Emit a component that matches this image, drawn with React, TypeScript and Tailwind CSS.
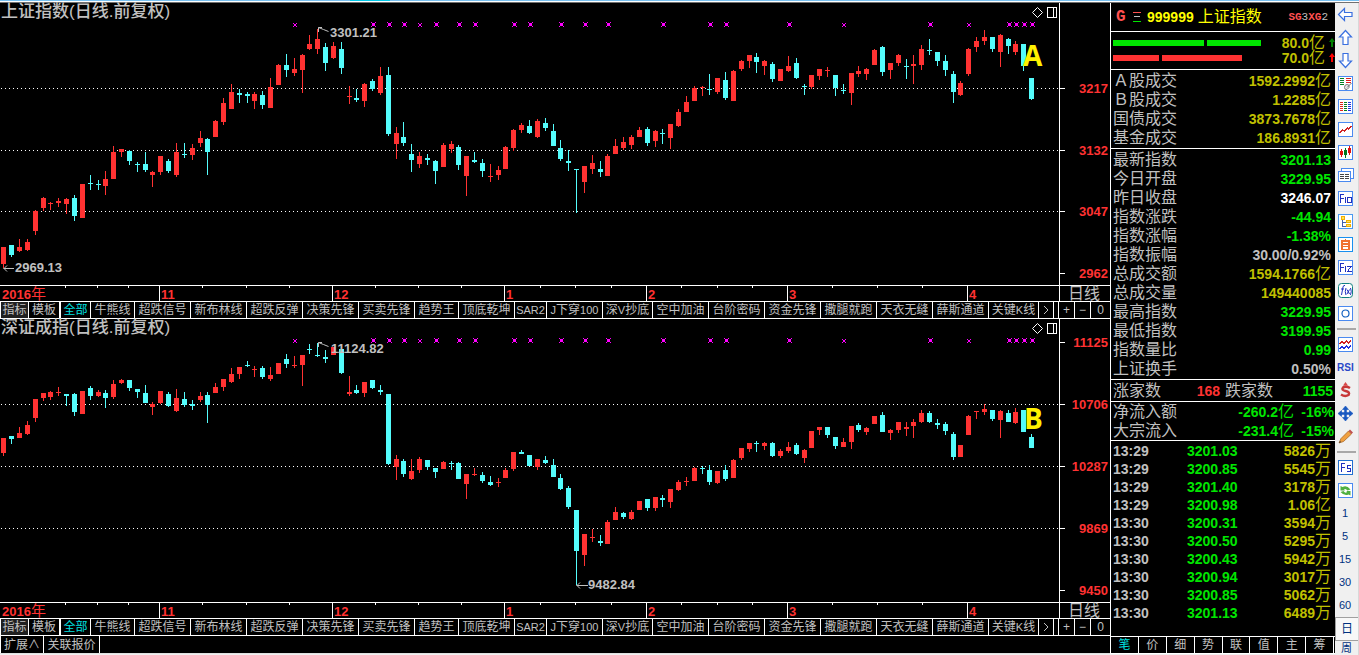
import type { ReactNode } from 'react';

// x, high, body top, body bottom, low, rising
type Candle = [number, number, number, number, number, 0 | 1];

const SHANGHAI: Candle[] = [
  [3, 247, 247, 264, 268, 1], [11, 245, 245, 255, 257, 0], [19, 239, 247, 251, 252, 1], [27, 239, 242, 250, 251, 1],
  [35, 210, 211, 231, 235, 1], [43, 197, 198, 208, 211, 1], [50, 202, 203, 204, 210, 1], [58, 198, 201, 203, 207, 1],
  [66, 198, 199, 204, 214, 1], [74, 195, 198, 216, 221, 0], [82, 184, 184, 218, 218, 1], [90, 175, 183, 184, 190, 0],
  [98, 180, 184, 185, 190, 0], [105, 171, 179, 186, 195, 1], [113, 146, 152, 179, 179, 1], [121, 149, 149, 152, 157, 1],
  [129, 150, 151, 161, 165, 0], [137, 162, 164, 165, 172, 0], [145, 152, 164, 170, 172, 0], [152, 171, 172, 175, 187, 1],
  [160, 156, 156, 172, 175, 1], [168, 159, 161, 171, 173, 0], [176, 143, 152, 175, 177, 1], [184, 143, 154, 155, 158, 0],
  [192, 144, 148, 155, 160, 1], [200, 131, 138, 143, 147, 1], [207, 138, 139, 152, 175, 0], [215, 120, 121, 137, 137, 1],
  [223, 98, 103, 122, 125, 1], [231, 84, 92, 109, 109, 1], [239, 89, 93, 95, 103, 0], [247, 92, 94, 96, 103, 0],
  [254, 92, 94, 101, 109, 1], [262, 91, 95, 105, 109, 0], [270, 78, 87, 108, 108, 1], [278, 64, 65, 85, 85, 1],
  [286, 54, 65, 70, 77, 0], [294, 58, 69, 73, 76, 1], [302, 54, 55, 70, 93, 1], [309, 35, 44, 49, 50, 1],
  [317, 29, 39, 49, 54, 1], [325, 43, 47, 63, 71, 0], [333, 42, 46, 58, 59, 1], [341, 42, 49, 68, 74, 0],
  [349, 86, 96, 97, 104, 1], [356, 89, 98, 100, 102, 0], [364, 83, 84, 101, 107, 1], [372, 79, 81, 89, 91, 0],
  [380, 67, 76, 93, 95, 1], [388, 67, 75, 134, 136, 0], [396, 127, 133, 144, 159, 1], [403, 122, 137, 143, 146, 0],
  [411, 144, 154, 160, 172, 0], [419, 152, 156, 164, 168, 1], [427, 154, 158, 160, 165, 0], [435, 160, 161, 171, 184, 0],
  [443, 143, 145, 167, 167, 1], [451, 141, 144, 149, 153, 1], [458, 145, 147, 165, 170, 0], [466, 156, 156, 176, 196, 1],
  [474, 152, 160, 162, 163, 0], [482, 159, 163, 171, 177, 0], [490, 164, 176, 177, 182, 1], [498, 166, 170, 175, 180, 1],
  [505, 146, 147, 169, 169, 1], [513, 129, 130, 148, 151, 1], [521, 123, 125, 130, 133, 1], [529, 120, 126, 133, 134, 0],
  [537, 119, 121, 137, 138, 1], [545, 118, 123, 128, 131, 0], [553, 124, 131, 146, 146, 0], [560, 140, 148, 159, 161, 0],
  [568, 150, 161, 163, 171, 0], [576, 169, 169, 170, 213, 0], [584, 166, 166, 182, 193, 1], [592, 155, 163, 169, 174, 1],
  [600, 161, 169, 172, 177, 0], [607, 154, 156, 176, 176, 1], [615, 139, 146, 154, 154, 1], [623, 137, 142, 148, 150, 1],
  [631, 135, 137, 145, 149, 1], [639, 127, 130, 137, 137, 1], [647, 127, 129, 143, 146, 0], [655, 130, 131, 141, 147, 1],
  [662, 129, 133, 134, 144, 0], [670, 124, 124, 138, 149, 1], [678, 109, 112, 126, 127, 1], [686, 96, 102, 112, 112, 1],
  [694, 86, 88, 101, 101, 1], [702, 86, 87, 88, 96, 1], [709, 74, 89, 90, 95, 0], [717, 78, 78, 92, 94, 1],
  [725, 72, 80, 98, 100, 0], [733, 70, 71, 101, 101, 1], [741, 60, 61, 69, 71, 1], [749, 55, 55, 61, 68, 1],
  [756, 53, 57, 62, 73, 0], [764, 60, 61, 66, 75, 1], [772, 62, 64, 79, 82, 0], [780, 69, 69, 81, 81, 1],
  [788, 56, 66, 71, 72, 1], [796, 58, 63, 78, 79, 0], [804, 84, 86, 87, 95, 0], [811, 75, 75, 87, 89, 1],
  [819, 69, 69, 76, 80, 1], [827, 67, 70, 71, 77, 1], [835, 75, 75, 88, 96, 0], [843, 84, 90, 91, 94, 0],
  [851, 73, 73, 93, 105, 1], [858, 66, 71, 74, 77, 1], [866, 68, 69, 74, 80, 1], [874, 49, 50, 65, 65, 1],
  [882, 46, 47, 72, 76, 0], [890, 63, 63, 70, 79, 1], [898, 54, 55, 63, 66, 1], [906, 59, 66, 67, 79, 0],
  [913, 55, 64, 66, 84, 1], [921, 45, 49, 65, 70, 1], [929, 39, 50, 51, 55, 0], [937, 52, 52, 61, 66, 0],
  [945, 55, 61, 70, 76, 0], [953, 71, 74, 92, 103, 0], [960, 81, 83, 95, 96, 1], [968, 48, 49, 74, 76, 1],
  [976, 37, 41, 47, 52, 1], [984, 30, 37, 41, 45, 1], [992, 37, 37, 49, 52, 0], [1000, 34, 35, 52, 67, 1],
  [1008, 38, 39, 46, 54, 0], [1015, 41, 44, 52, 55, 1], [1023, 44, 44, 66, 71, 0], [1031, 78, 78, 99, 100, 0],
];

const SHENZHEN: Candle[] = [
  [3, 438, 438, 453, 456, 1], [11, 436, 436, 439, 444, 0], [19, 427, 433, 438, 438, 1], [27, 421, 425, 434, 435, 1],
  [35, 399, 399, 418, 422, 1], [43, 393, 393, 398, 401, 1], [50, 391, 392, 397, 400, 1], [58, 387, 392, 393, 396, 1],
  [66, 394, 394, 396, 406, 0], [74, 393, 394, 412, 416, 0], [82, 391, 391, 414, 414, 1], [90, 386, 388, 396, 400, 0],
  [98, 390, 392, 396, 397, 1], [105, 390, 393, 398, 408, 0], [113, 380, 384, 397, 399, 1], [121, 379, 380, 383, 384, 1],
  [129, 380, 380, 388, 391, 0], [137, 389, 389, 392, 398, 0], [145, 385, 393, 403, 403, 0], [152, 402, 404, 407, 415, 1],
  [160, 391, 391, 403, 404, 1], [168, 392, 394, 406, 407, 0], [176, 389, 398, 411, 412, 1], [184, 392, 399, 405, 407, 0],
  [192, 400, 404, 406, 410, 0], [200, 392, 396, 400, 402, 1], [207, 392, 395, 405, 423, 0], [215, 383, 387, 393, 393, 1],
  [223, 379, 379, 387, 391, 1], [231, 368, 374, 382, 383, 1], [239, 367, 367, 374, 379, 1], [247, 361, 365, 366, 367, 0],
  [254, 366, 369, 370, 377, 1], [262, 366, 368, 377, 379, 0], [270, 367, 375, 379, 381, 1], [278, 363, 363, 374, 374, 1],
  [286, 354, 359, 364, 368, 0], [294, 356, 365, 366, 368, 1], [302, 355, 355, 365, 386, 1], [309, 344, 349, 350, 354, 0],
  [317, 343, 355, 356, 357, 0], [325, 350, 357, 359, 363, 0], [333, 347, 347, 355, 355, 1], [341, 349, 349, 373, 374, 0],
  [349, 376, 392, 394, 396, 1], [356, 385, 390, 393, 394, 0], [364, 382, 382, 393, 397, 1], [372, 380, 380, 388, 389, 0],
  [380, 385, 390, 392, 395, 0], [388, 394, 394, 464, 465, 0], [396, 455, 459, 467, 480, 1], [403, 459, 461, 474, 477, 0],
  [411, 459, 471, 479, 480, 1], [419, 457, 459, 470, 473, 1], [427, 460, 460, 467, 470, 0], [435, 468, 468, 472, 478, 0],
  [443, 461, 462, 469, 469, 1], [451, 461, 463, 464, 470, 0], [458, 462, 463, 479, 479, 0], [466, 474, 474, 484, 499, 1],
  [474, 468, 474, 475, 476, 1], [482, 472, 475, 481, 483, 0], [490, 476, 482, 485, 486, 0], [498, 478, 482, 483, 487, 1],
  [505, 468, 470, 478, 478, 1], [513, 452, 452, 469, 471, 1], [521, 450, 452, 454, 454, 0], [529, 455, 455, 466, 466, 0],
  [537, 459, 459, 467, 470, 1], [545, 456, 460, 463, 464, 0], [553, 459, 465, 477, 477, 0], [560, 474, 478, 489, 490, 0],
  [568, 486, 488, 507, 509, 0], [576, 510, 510, 551, 585, 0], [584, 534, 534, 555, 566, 1], [592, 529, 537, 538, 542, 1],
  [600, 535, 541, 543, 546, 0], [607, 520, 522, 544, 544, 1], [615, 507, 512, 520, 520, 1], [623, 512, 513, 517, 519, 0],
  [631, 510, 512, 519, 520, 1], [639, 501, 501, 510, 510, 1], [647, 499, 499, 508, 511, 0], [655, 497, 497, 508, 511, 1],
  [662, 495, 498, 500, 507, 0], [670, 489, 489, 502, 508, 1], [678, 480, 482, 490, 491, 1], [686, 477, 481, 482, 486, 1],
  [694, 467, 468, 481, 481, 1], [702, 466, 468, 469, 474, 0], [709, 465, 470, 482, 485, 0], [717, 471, 471, 483, 484, 1],
  [725, 465, 470, 479, 481, 0], [733, 459, 460, 478, 478, 1], [741, 448, 448, 458, 460, 1], [749, 443, 443, 449, 452, 1],
  [756, 441, 443, 444, 452, 0], [764, 442, 443, 446, 450, 1], [772, 442, 443, 456, 457, 0], [780, 449, 451, 456, 458, 1],
  [788, 442, 447, 451, 453, 1], [796, 443, 445, 454, 455, 0], [804, 449, 450, 458, 463, 1], [811, 431, 431, 448, 448, 1],
  [819, 427, 427, 430, 435, 1], [827, 427, 427, 435, 438, 0], [835, 437, 437, 446, 449, 0], [843, 438, 442, 447, 447, 1],
  [851, 426, 426, 442, 449, 1], [858, 423, 425, 430, 432, 0], [866, 427, 428, 432, 435, 1], [874, 416, 416, 424, 424, 1],
  [882, 412, 415, 432, 432, 0], [890, 429, 430, 433, 440, 1], [898, 422, 422, 430, 433, 1], [906, 422, 427, 429, 436, 1],
  [913, 419, 422, 426, 438, 1], [921, 410, 413, 422, 423, 1], [929, 411, 413, 422, 423, 0], [937, 419, 423, 425, 429, 0],
  [945, 422, 424, 431, 435, 0], [953, 432, 434, 457, 460, 0], [960, 445, 445, 457, 457, 1], [968, 415, 416, 435, 435, 1],
  [976, 411, 411, 412, 419, 1], [984, 404, 409, 412, 415, 1], [992, 410, 410, 419, 421, 0], [1000, 410, 411, 420, 438, 1],
  [1008, 410, 413, 422, 422, 0], [1015, 408, 412, 423, 424, 1], [1023, 410, 410, 432, 432, 0], [1031, 434, 437, 448, 448, 0],
];

const MARKS = [373, 389, 404, 436, 459, 475, 514, 530, 561, 585, 608, 663, 710, 726, 789, 930, 1009, 1016, 1024, 1032];
const SMALL_MARKS = [294, 419, 843, 968];
const MINOR_TICKS = [65, 97, 128, 202, 246, 289, 375, 418, 461, 540, 575, 611, 681, 717, 752, 832, 877, 922];
const MONTHS: [number, string][] = [[159, '11'], [332, '12'], [504, '1'], [646, '2'], [787, '3'], [967, '4']];

type ChartProps = {
  title: string;
  top: number;
  height: number;
  axisY: number;
  candles: Candle[];
  scale: [number, string][];
  grid: number[];
  children: ReactNode;
};

function Chart({ title, top, height, axisY, candles, scale, grid, children }: ChartProps) {
  const markY = top + 21;
  return (
    <section className="relative">
      <h2 className="absolute left-px top-0 text-[17px] leading-[18px] font-medium text-[#c0c0c0]">{title}</h2>
      <svg viewBox={`0 ${top} 1110 ${height}`} className="block h-auto w-full" role="img" aria-label={title}>
        <g shapeRendering="crispEdges">
          {grid.map((y) => (
            <path key={y} d={`M1 ${y + 0.5}H1059`} stroke="#fff" strokeDasharray="1 3" />
          ))}
          {candles.map(([x, high, bodyTop, bodyBottom, low, up]) => (
            <g key={x} fill={up ? '#ff3232' : '#54fcfc'}>
              <rect x={x} y={high} width="1" height={low - high} />
              <rect x={x - 2} y={bodyTop} width="5" height={bodyBottom - bodyTop} />
            </g>
          ))}
          <g fill="#ff00ff">
            {MARKS.map((x) => (
              <path key={x} d={`M${x - 1} ${markY - 1}h3v3h-3zM${x - 2} ${markY - 2}h1v1h-1zM${x + 2} ${markY - 2}h1v1h-1zM${x - 2} ${markY + 2}h1v1h-1zM${x + 2} ${markY + 2}h1v1h-1z`} />
            ))}
            {SMALL_MARKS.map((x) => (
              <path key={x} d={`M${x} ${markY}h2v2h-2zM${x - 1} ${markY - 1}h1v1h-1zM${x + 2} ${markY - 1}h1v1h-1zM${x - 1} ${markY + 2}h1v1h-1zM${x + 2} ${markY + 2}h1v1h-1z`} />
            ))}
          </g>
          <g fill="#fff">
            <rect x="0" y={axisY} width="1110" height="1" />
            <rect x="1059" y={top} width="1" height={height} />
            {MINOR_TICKS.map((x) => <rect key={x} x={x} y={axisY} width="1" height="3" />)}
            {MONTHS.map(([x]) => <rect key={x} x={x} y={axisY} width="1" height="16" />)}
            {scale.map(([y]) => <rect key={y} x="1060" y={y} width="5" height="1" />)}
          </g>
          <g fill="none" stroke="#fff">
            <rect x="1047.5" y={top + 4.5} width="9" height="10" />
            <path d={`M1053.5 ${top + 4.5}v10`} />
          </g>
        </g>
        <path d={`M1037.5 ${top + 4.5}l5 5l-5 5l-5 -5z`} fill="none" stroke="#fff" />
        <g className="fill-[#ff3232] text-[13px] font-bold">
          {scale.map(([y, label]) => <text key={y} x="1108" y={y + 5} textAnchor="end">{label}</text>)}
          {MONTHS.map(([x, label]) => <text key={x} x={x + 2} y={axisY + 14}>{label}</text>)}
          <text x="2" y={axisY + 14}>2016<tspan className="text-[15px] font-normal">年</tspan></text>
        </g>
        <text x="1068" y={axisY + 14} className="fill-[#c0c0c0] text-[16px]">日线</text>
        {children}
      </svg>
    </section>
  );
}

const INDICATORS: [string, string][] = [
  ['牛熊线', 'w-11'], ['超跌信号', 'w-14'], ['新布林线', 'w-14'], ['超跌反弹', 'w-14'], ['决策先锋', 'w-14'],
  ['买卖先锋', 'w-14'], ['趋势王', 'w-11'], ['顶底乾坤', 'w-14'], ['SAR2', 'w-8'], ['J下穿100', 'w-14'],
  ['深V抄底', 'w-[50px]'], ['空中加油', 'w-14'], ['台阶密码', 'w-14'], ['资金先锋', 'w-14'], ['撒腿就跑', 'w-14'],
  ['天衣无缝', 'w-14'], ['薛斯通道', 'w-14'], ['关键K线', 'w-[50px]'],
];

const CELL = 'h-4 shrink-0 whitespace-nowrap border-r border-white text-center text-xs leading-4';

function Label({ name }: { name: string }) {
  return (
    <>
      {name.split(/([A-Z0-9]+)/).map((part, i) =>
        i % 2 ? <span key={i} className="text-[11px]">{part}</span> : part,
      )}
    </>
  );
}

function IndicatorBar() {
  return (
    <div className="flex overflow-hidden border-y border-l border-white text-[#c0c0c0]">
      <button className={`${CELL} w-[28px] bg-[#202020]`}>指标</button>
      <button className={`${CELL} w-[31px]`}>模板</button>
      <button className={`${CELL} w-[31px] border-l text-[#00e0e0]`}>全部</button>
      {INDICATORS.map(([name, width]) => (
        <button key={name} className={`${CELL} ${width}`}><Label name={name} /></button>
      ))}
      <button className={`${CELL} w-[15px]`} aria-label="更多">
        <svg viewBox="0 0 6 10" className="mx-auto h-[10px] w-[6px]"><path d="M1 1l4 4l-4 4" fill="none" stroke="#c0c0c0" /></svg>
      </button>
      <span className={`${CELL} w-[5px]`} />
      <button className={`${CELL} w-4`}>+</button>
      <button className={`${CELL} w-4`}>−</button>
      <button className={`${CELL} min-w-[18px] flex-1 border-r-0`}>0</button>
    </div>
  );
}

const GREEN = 'text-[#00e600]';
const RED = 'text-[#ff3232]';
const OLIVE = 'text-[#c0c000]';
const GRAY = 'text-[#c0c0c0]';

function Num({ value, color }: { value: string; color: string }) {
  const unit = /[亿万]$/.test(value) ? value.slice(-1) : '';
  const digits = unit ? value.slice(0, -1) : value;
  return (
    <span className={`${color} text-sm leading-4 font-bold`}>
      {digits}
      {unit && <span className="text-base leading-4 font-normal">{unit}</span>}
    </span>
  );
}

function Stats({ rows }: { rows: [string, string, string][] }) {
  return (
    <dl className="border-b border-white pt-px pr-1 pb-px pl-[2px]">
      {rows.map(([label, value, color]) => (
        <div key={label} className="flex h-[19px] items-center justify-between">
          <dt className="text-base leading-4 text-[#c0c0c0]">{label}</dt>
          <dd className="flex"><Num value={value} color={color} /></dd>
        </div>
      ))}
    </dl>
  );
}

const TURNOVER: [string, string, string][] = [
  ['Ａ股成交', '1592.2992亿', OLIVE], ['Ｂ股成交', '1.2285亿', OLIVE],
  ['国债成交', '3873.7678亿', OLIVE], ['基金成交', '186.8931亿', OLIVE],
];

const QUOTE: [string, string, string][] = [
  ['最新指数', '3201.13', GREEN], ['今日开盘', '3229.95', GREEN], ['昨日收盘', '3246.07', 'text-white'],
  ['指数涨跌', '-44.94', GREEN], ['指数涨幅', '-1.38%', GREEN], ['指数振幅', '30.00/0.92%', GRAY],
  ['总成交额', '1594.1766亿', OLIVE], ['总成交量', '149440085', OLIVE], ['最高指数', '3229.95', GREEN],
  ['最低指数', '3199.95', GREEN], ['指数量比', '0.99', GREEN], ['上证换手', '0.50%', GRAY],
];

const TICKS: [string, string, string][] = [
  ['13:29', '3201.03', '5826万'], ['13:29', '3200.85', '5545万'], ['13:29', '3201.40', '3178万'],
  ['13:29', '3200.98', '1.06亿'], ['13:30', '3200.31', '3594万'], ['13:30', '3200.50', '5295万'],
  ['13:30', '3200.43', '5942万'], ['13:30', '3200.94', '3017万'], ['13:30', '3200.85', '5062万'],
  ['13:30', '3201.13', '6489万'],
];

function Arrow({ color }: { color: string }) {
  return (
    <svg viewBox="0 0 6 9" className="ml-1 h-[9px] w-[6px] shrink-0"><path d="M3 0L6 4H4V9H2V4H0Z" fill={color} /></svg>
  );
}

function QuotePanel() {
  return (
    <aside className="flex w-[225px] shrink-0 flex-col border-l border-white">
      <header className="flex h-[29px] items-center border-b border-white pl-[5px]">
        <span className="w-[17px] font-['Liberation_Mono',monospace] text-base font-bold text-[#ff5050]">G</span>
        <svg viewBox="0 0 8 10" className="mr-[6px] h-[10px] w-2" shapeRendering="crispEdges">
          <path d="M0 .5h8" stroke="#ff5050" /><path d="M1 4.500h6" stroke="#c0c0c0" /><path d="M0 9.500h8" stroke="#00e600" />
        </svg>
        <span className="text-sm font-bold text-[#ffff00]">999999</span>
        <h1 className="ml-[4px] text-base leading-4 text-[#ffff00]">上证指数</h1>
        <span className="ml-auto pr-[7px] font-['Liberation_Mono',monospace] text-[11px] text-[#c0c0c0]">
          <b className="text-[#ff5050]">SG</b>3<b className="text-[#ff5050]">XG</b>2
        </span>
      </header>
      <div className="h-[38px] border-b border-white pt-[3px] pl-[2px]">
        <div className="flex h-[15px] items-center">
          <span className="h-[6px] w-[91px] bg-[#00e600]" />
          <span className="ml-[3px] h-[6px] w-[54px] bg-[#00e600]" />
          <span className="ml-auto flex"><Num value="80.0亿" color={OLIVE} /></span>
          <Arrow color="#008000" />
        </div>
        <div className="flex h-[15px] items-center">
          <span className="h-[6px] w-[46px] bg-[#ff3232]" />
          <span className="ml-[3px] h-[6px] w-[80px] bg-[#ff3232]" />
          <span className="ml-auto flex"><Num value="70.0亿" color={OLIVE} /></span>
          <Arrow color="#ff0000" />
        </div>
      </div>
      <Stats rows={TURNOVER} />
      <Stats rows={QUOTE} />
      <div className="flex h-[22px] items-center border-b border-white pr-[2px] pl-[2px] text-base leading-4 text-[#c0c0c0]">
        <span>涨家数</span>
        <span className="flex w-[59px] justify-end"><Num value="168" color={RED} /></span>
        <span className="ml-[5px]">跌家数</span>
        <span className="ml-auto flex"><Num value="1155" color={GREEN} /></span>
      </div>
      <div className="border-b border-white pr-px pl-[2px]">
        {[['净流入额', '-260.2亿', '-16%'], ['大宗流入', '-231.4亿', '-15%']].map(([label, value, pct]) => (
          <div key={label} className="flex h-[19px] items-center">
            <span className="flex-1 text-base leading-4 text-[#c0c0c0]">{label}</span>
            <span className="flex"><Num value={value} color={GREEN} /></span>
            <span className="flex w-10 justify-end"><Num value={pct} color={GREEN} /></span>
          </div>
        ))}
      </div>
      <table className="mt-px w-full border-collapse">
        <tbody>
          {TICKS.map(([time, price, volume], i) => (
            <tr key={i} className="h-[18px]">
              <td className="w-[76px] py-0 pl-[2px]"><span className="flex"><Num value={time} color={GRAY} /></span></td>
              <td className="p-0"><span className="flex"><Num value={price} color={GREEN} /></span></td>
              <td className="py-0 pr-1"><span className="flex justify-end"><Num value={volume} color={OLIVE} /></span></td>
            </tr>
          ))}
        </tbody>
      </table>
      <nav className="mt-auto flex h-[18px] border-y border-white pr-px text-xs leading-4 text-[#c0c0c0]">
        {['笔', '价', '细', '势', '联', '值', '主', '筹'].map((tab, i) => (
          <button key={tab} className={`flex-1 border-r border-white ${i === 0 ? 'text-[#00e0e0]' : ''}`}>{tab}</button>
        ))}
      </nav>
    </aside>
  );
}

function Frame({ color = '#4a8af0', children }: { color?: string; children: ReactNode }) {
  return (
    <g shapeRendering="crispEdges">
      <rect x=".5" y=".5" width="14" height="14" fill="#fff" stroke={color} />
      {children}
    </g>
  );
}

const TOOLS: [string, ReactNode][] = [
  ['后退', <path d="M.5 7.500L6.500 1.500V5.500H14V9.500H6.500V13.500Z" fill="#fff" stroke="#3a70e0" strokeWidth="1.200" />],
  ['上移', <path d="M7.500 .5L13.500 7H10V14.500H5V7H1.500Z" fill="#fff" stroke="#3a70e0" strokeWidth="1.200" />],
  ['下移', <path d="M7.500 14.500L13.500 8H10V.5H5V8H1.500Z" fill="#fff" stroke="#3a70e0" strokeWidth="1.200" />],
  ['报价设置', <>
    <Frame><path d="M2 2.500h4M2 4.500h4M2 6.500h4M2 8.500h4" stroke="#008020" /><path d="M8 2.500h5M8 4.500h5M8 6.500h5" stroke="#e02020" /></Frame>
    <path d="M6.500 11.500Q6.500 8.500 9 8.500Q12 8.500 11 11.500L9 13.500Q6.500 14 6.500 11.500ZM9 11.500l4.500-4.500" fill="#eee" stroke="#777" />
  </>],
  ['行情报价', <Frame>
    <path d="M2 3.500h3M2 5.500h3M2 7.500h3M2 9.500h3M2 11.500h3" stroke="#e02020" />
    <path d="M6 3.500h3M6 5.500h3M6 7.500h3M6 9.500h3M6 11.500h3" stroke="#008020" />
    <path d="M10 3.500h3M10 5.500h3M10 7.500h3M10 9.500h3M10 11.500h3" stroke="#2030e0" />
  </Frame>],
  ['分时走势', <Frame><path d="M1.500 11l3-3l2 1l3-3l1 1l3-3" fill="none" stroke="#d02020" /></Frame>],
  ['K线', <Frame>
    <path d="M2 6h3v4h-3zM10 3h3v5h-3zM3 4h1v8h-1zM11 1h1v9h-1z" fill="#e01010" /><path d="M6 5h3v5h-3zM7 3h1v10h-1z" fill="#007820" />
  </Frame>],
  ['资讯', <g shapeRendering="crispEdges">
    <path d="M3.500 3V.5H15.500V10.500H13" fill="#fff" stroke="#4a8af0" /><rect x=".5" y="3.500" width="12" height="10" fill="#fff" stroke="#4a8af0" />
    <path d="M2 6.500h4M7 6.500h4M2 8.500h4M7 8.500h4M2 10.500h4M7 10.500h4" stroke="#444" />
  </g>],
  ['F10', <Frame><path d="M2.500 12V3.500H6M2.500 7.500H6M7.500 6V12M9.500 6.500H13.500V11.500H9.500Z" fill="none" stroke="#2030c0" /></Frame>],
  ['版面', <Frame color="#4a9af0"><path d="M4.500 6v6.500H8M4.500 8.500H8" fill="none" stroke="#4060b0" /><path d="M3.500 2.500h3v3h-3zM8.500 6.500h4v2h-4zM8.500 10.500h4v2h-4z" fill="#ffe060" stroke="#f0b000" /></Frame>],
  ['自选', <Frame color="#1890f0"><path d="M4 4h7v8.500H4zM7.500 2v2M4 6.800h7M4 9.500h7" fill="none" stroke="#f07030" strokeWidth="1.500" /></Frame>],
  ['F12', <Frame><path d="M2.500 12V3.500H6M2.500 7.500H6M7.500 6v6M9 6.500H13L9.500 11.500H14" fill="none" stroke="#2030c0" /></Frame>],
  ['公式', <>
    <rect x=".5" y=".5" width="14" height="14" rx="3" fill="#fff" stroke="#108080" />
    <path d="M7 2.500Q5.500 2 5 4L3.500 12M3 6h3M8 5q-1.500 3.500 0 7M12.500 5q1.500 3.500 0 7M9 6.500l2.500 4.500M11.500 6.500l-2.500 4.500" fill="none" stroke="#2030c0" />
  </>],
  ['画圆', <><Frame>{null}</Frame><circle cx="7.500" cy="7.500" r="3.500" fill="none" stroke="#1060c0" strokeWidth="1.200" /></>],
  ['', null],
  ['叠加', <Frame>
    <path d="M1.500 7l2.500-2.500l2 2l2.500-2.500l2 2l2.500-2.500" fill="none" stroke="#d02020" /><path d="M1.500 12l2.500-2.500l2 2l2.500-2.500l2 2l2.500-2.500" fill="none" stroke="#2030e0" />
  </Frame>],
  ['RSI', <text x="-1" y="11" className="fill-[#2848c8] text-[10px] font-bold">RSI</text>],
  ['资金', <>
    <path d="M12 5Q8 2.500 5 4.500Q3 7 7.500 8Q12.500 9 10.500 12Q7 14 3 11.500" fill="none" stroke="#c83838" strokeWidth="2.500" /><path d="M7.500 -1l2.500 3.500h-5z" fill="#d84848" />
  </>],
  ['移动', <>
    <path d="M7.500 0l3 3.500h-6zM7.500 15l3-3.500h-6zM0 7.500l3.500-3v6zM15 7.500l-3.500-3v6z" fill="#1858c0" stroke="#1858c0" strokeWidth=".6" /><path d="M7.500 3v9M3 7.500h9" stroke="#1858c0" strokeWidth="2.500" />
  </>],
  ['画线', <>
    <path d="M1 14l2-4.500L10.500 2l3 3L5.500 12.500z" fill="#f0a040" stroke="#a06020" strokeWidth=".7" /><path d="M10.500 2l1.500-1.500l3 3L13.500 5z" fill="#c05050" /><path d="M1 14l1-2l1 1z" fill="#333" />
  </>],
  ['', null],
  ['F5', <Frame color="#2070d0"><path d="M3.500 12V3.500H7M3.500 7.500H7M12.500 5.500H9.500V8.500H12.500V11.500H9" fill="none" stroke="#2030c0" /></Frame>],
  ['刷新', <><Frame>{null}</Frame>
    <path d="M2.500 7.500V3l2 1Q8.500 1.500 12.500 6.500L9.500 7.500Q7.500 5 6 6.500L7 7.500zM12.500 8V12.500l-2-1Q6.500 13.500 2.500 9L5.500 8Q7.500 11 9 9L8.500 8z" fill="#50b040" />
  </>],
];

function Toolbar() {
  return (
    <nav className="flex w-6 shrink-0 flex-col overflow-hidden border-r border-[#d8d8d8] bg-[#f0f0f0] text-[#003080]">
      {TOOLS.map(([label, icon], i) =>
        icon ? (
          <button key={i} aria-label={label} className="flex h-[23px] shrink-0 items-center pl-[3px]">
            <svg viewBox="0 0 15 15" className="h-[15px] w-[15px] overflow-visible">{icon}</svg>
          </button>
        ) : (
          <hr key={i} className="mx-[2px] my-[3px] h-[2px] shrink-0 border-0 bg-[#a8a8a8]" />
        ),
      )}
      {['1', '5', '15', '30', '60'].map((period) => (
        <button key={period} className="h-[23px] shrink-0 pr-[3px] text-center text-[11px] leading-[23px]">{period}</button>
      ))}
      <button className="h-6 shrink-0 border-y border-l border-[#a0a0a0] bg-[#f8f8f8] text-center text-xs">日</button>
      <button className="h-[14px] shrink-0 text-center text-[11px] leading-[14px]">周</button>
    </nav>
  );
}

export default function App() {
  return (
    <div className="flex h-screen flex-col overflow-hidden bg-[#f0f0f0] font-['Liberation_Sans','Noto_Sans_CJK_SC',sans-serif]">
      <div className="h-[3px] shrink-0 border-b border-[#707070] bg-white">
        <div className="flex h-px bg-[#78c0f0]"><span className="ml-[350px] w-10 bg-[#00c8e8]" /></div>
      </div>
      <div className="flex min-h-0 flex-1">
        <div className="flex min-w-0 flex-1 flex-col pb-px">
          <div className="flex min-h-0 flex-1 bg-black">
            <main className="flex min-w-0 flex-1 flex-col border-b border-[#e0e0e0]">
              <Chart
                title="上证指数(日线.前复权)" top={3} height={298} axisY={285} candles={SHANGHAI}
                grid={[88, 150, 211]} scale={[[88, '3217'], [150, '3132'], [211, '3047'], [273, '2962']]}
              >
                <path d="M318.500 32V27.500H322M318.500 27.500l5 2l5 2" fill="none" stroke="#c0c0c0" />
                <path d="M3.500 268.500H14M7 265.500l-3 3l3 3" fill="none" stroke="#c0c0c0" />
                <g className="fill-[#c0c0c0] text-[13px] font-bold"><text x="330" y="37">3301.21</text><text x="15" y="272">2969.13</text></g>
                <text x="1023" y="66" className="fill-[#fff000] font-['Open_Sans',sans-serif] text-[28px] font-bold">A</text>
              </Chart>
              <IndicatorBar />
              <Chart
                title="深证成指(日线.前复权)" top={319} height={299} axisY={602} candles={SHENZHEN}
                grid={[404, 466, 528]} scale={[[342, '11125'], [404, '10706'], [466, '10287'], [528, '9869'], [590, '9450']]}
              >
                <path d="M318.500 347V342.500H322M318.500 342.500l5 2l5 2" fill="none" stroke="#c0c0c0" />
                <path d="M576.500 585.500H588M580 582.500l-3 3l3 3" fill="none" stroke="#c0c0c0" />
                <g className="fill-[#c0c0c0] text-[13px] font-bold"><text x="331" y="353">11124.82</text><text x="588" y="589">9482.84</text></g>
                <text x="1024" y="429" className="fill-[#fff000] font-['Open_Sans',sans-serif] text-[28px] font-bold">B</text>
              </Chart>
              <IndicatorBar />
              <div className="flex min-h-4 flex-1 items-stretch border-l border-white text-xs leading-4 text-[#c0c0c0]">
                <button className="w-[43px] border-r border-white">扩展∧</button>
                <button className="w-14 border-r border-white">关联报价</button>
              </div>
            </main>
            <QuotePanel />
          </div>
        </div>
        <Toolbar />
      </div>
    </div>
  );
}
